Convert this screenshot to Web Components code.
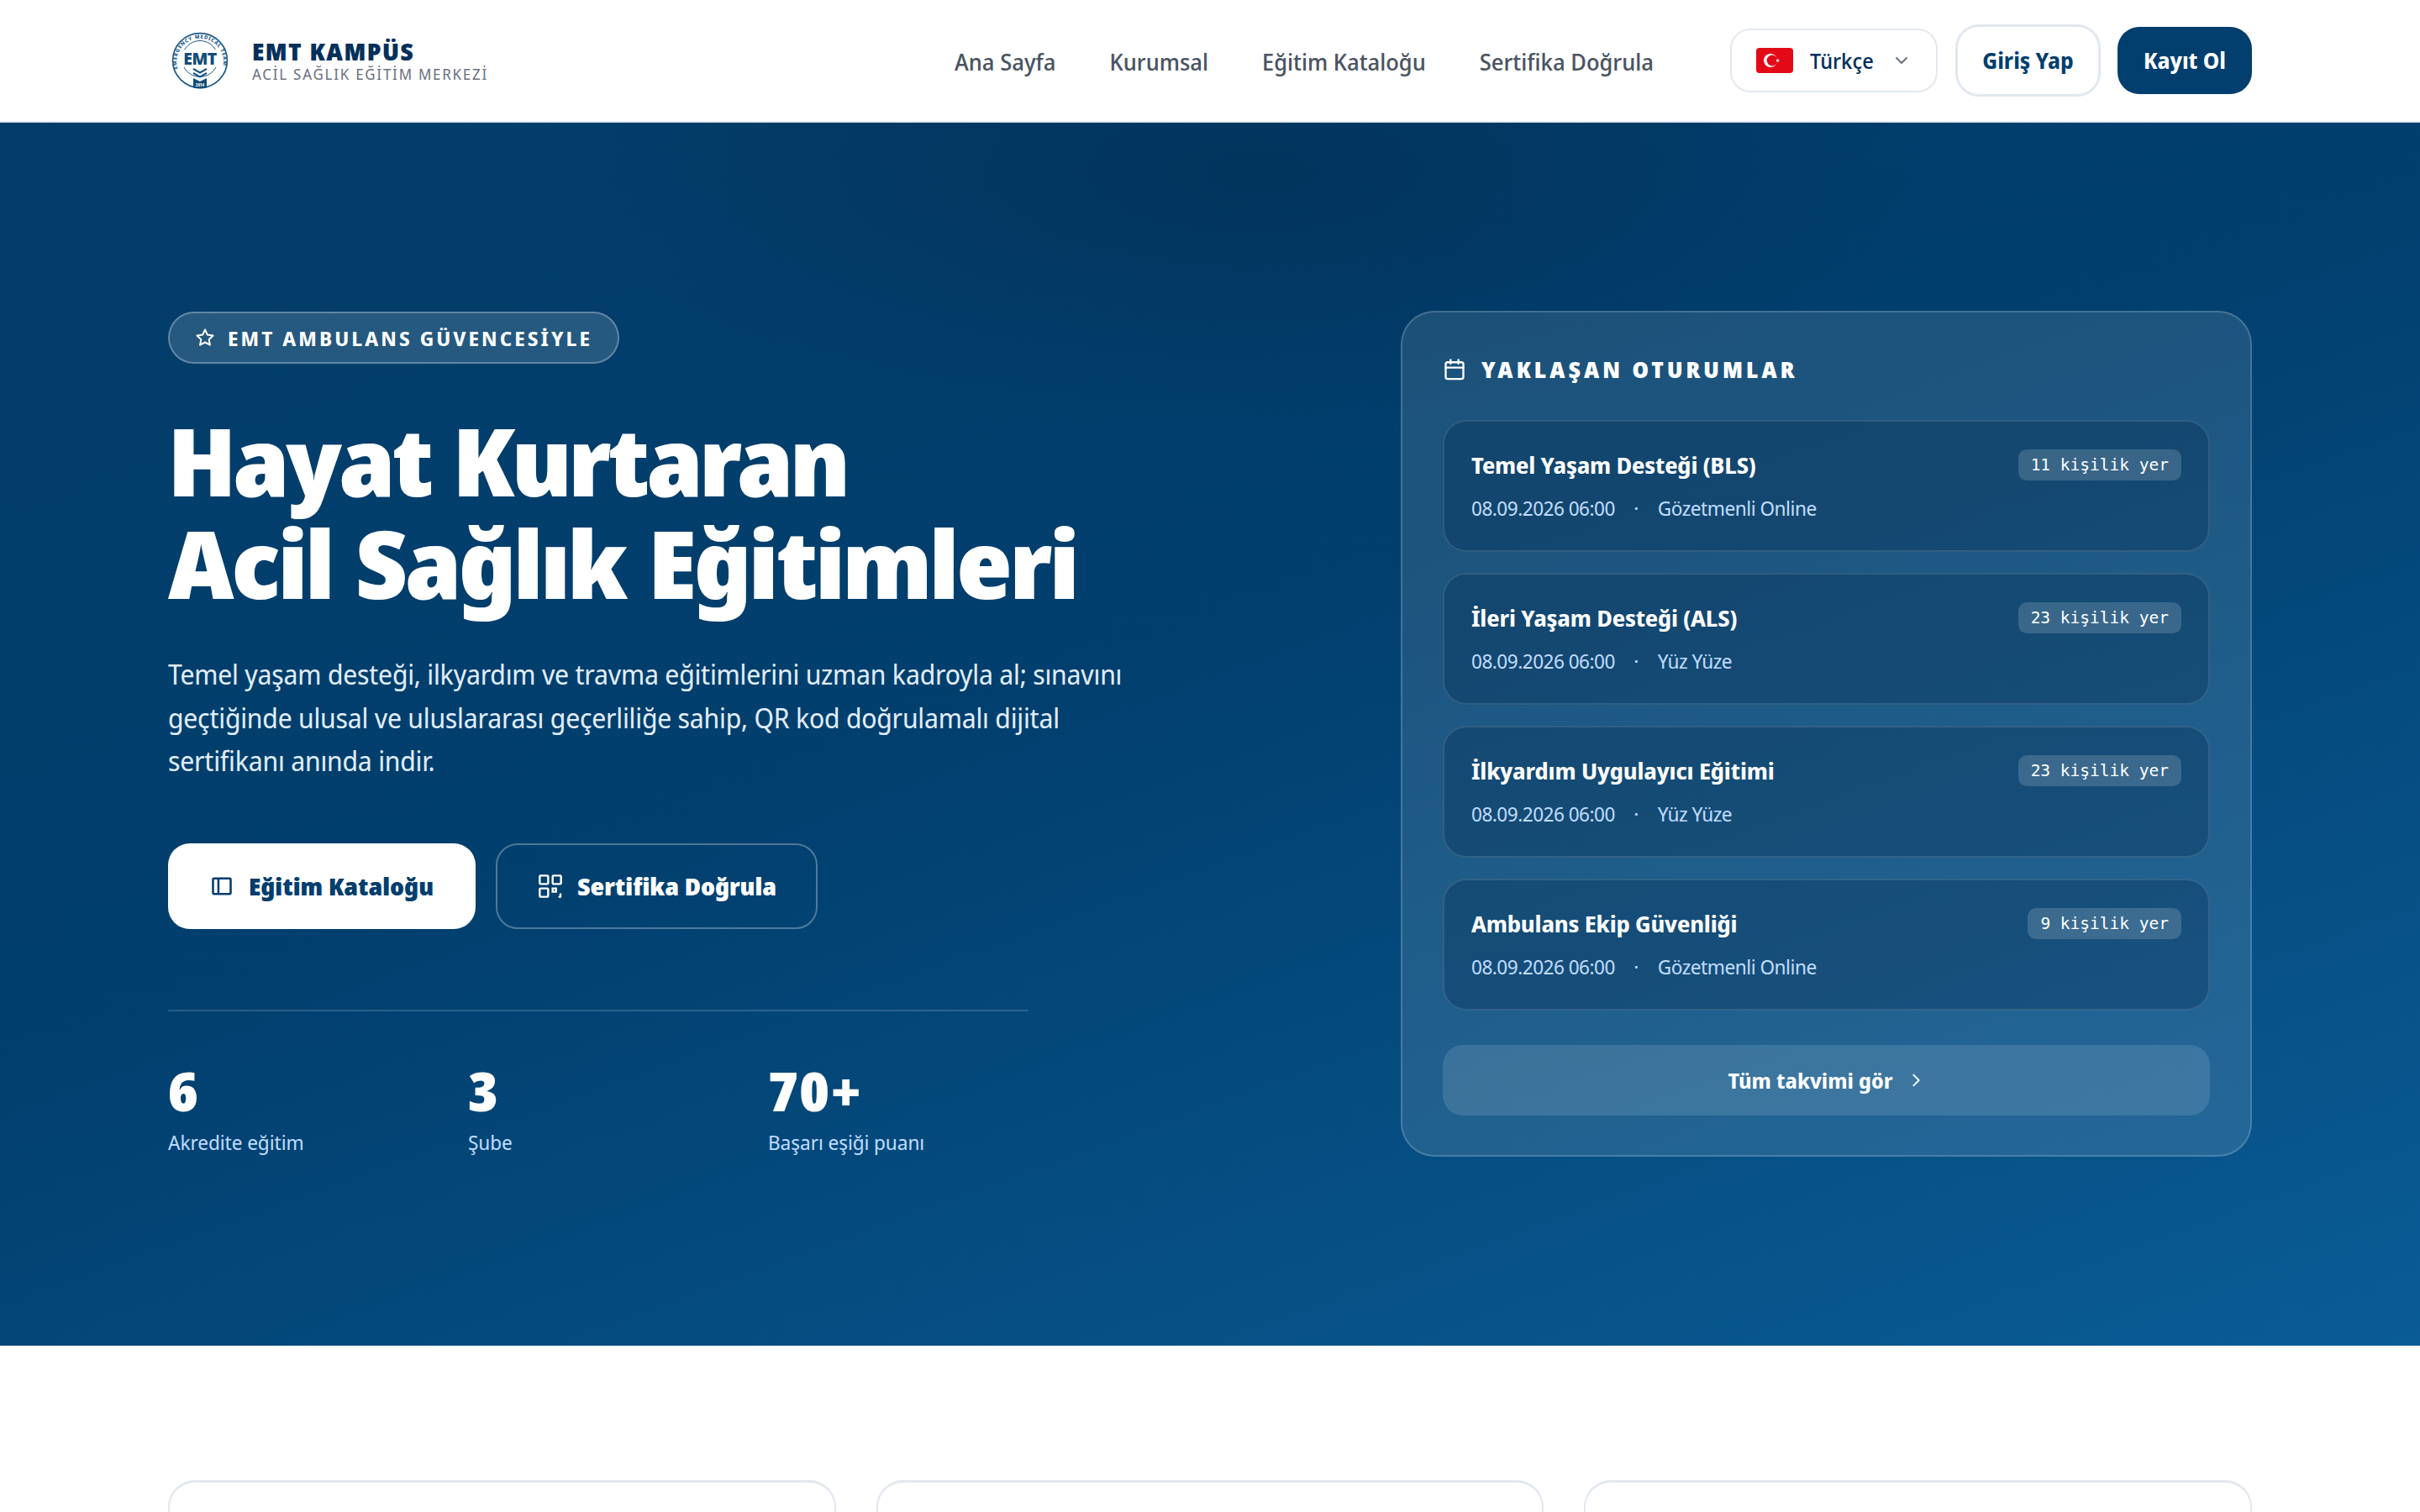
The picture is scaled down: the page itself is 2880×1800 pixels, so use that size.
<!DOCTYPE html>
<html lang="tr">
<head>
<meta charset="utf-8">
<title>EMT Kampüs</title>
<style>
html,body{margin:0;padding:0;background:#fff;font-family:"Noto Sans Display","Noto Sans",sans-serif;overflow:hidden;height:1800px;}
</style>
</head>
<body>
<emt-nav></emt-nav>
<emt-hero></emt-hero>
<emt-features></emt-features>
<script>
const chevronDown = `<svg width="24" height="24" viewBox="0 0 24 24" fill="none" stroke="currentColor" stroke-width="2" stroke-linecap="round" stroke-linejoin="round"><path d="m6 9 6 6 6-6"/></svg>`;

class EmtLogo extends HTMLElement{
    constructor(){
        super();
        this.attachShadow({mode:"open"});
        this.shadowRoot.innerHTML = `
        <style>
            :host{display:block;width:68px;height:68px;}
            svg{display:block;}
            text{font-family:"Noto Sans",sans-serif;font-weight:800;fill:#1c5a88;}
        </style>
        <svg width="68" height="68" viewBox="0 0 68 68">
            <defs>
                <path id="ring" d="M7.5 44 A27.8 27.8 0 1 1 60.5 44"/>
            </defs>
            <circle cx="34" cy="34" r="32.4" fill="#fff" stroke="#1c5a88" stroke-width="1.7"/>
            <text font-size="6" letter-spacing=".75"><textPath href="#ring">EMERGENCY MEDICAL TEAM</textPath></text>
            <circle cx="34" cy="32" r="21.5" fill="none" stroke="#1c5a88" stroke-width="1"/>
            <rect x="10" y="21" width="48" height="21" fill="#fff"/>
            <text x="34" y="39" font-size="19.5" text-anchor="middle" style="font-weight:900;fill:#134c78" letter-spacing="-.6">EMT</text>
            <path d="M26 44l8 4.5 8-4.5M26 49l8 4.5 8-4.5" fill="none" stroke="#1c5a88" stroke-width="2.2"/>
            <path d="M26 55l8 4 8-4v11.5a33 33 0 0 1-16 0z" fill="#134c78"/>
            <text x="34" y="64.5" font-size="4.5" text-anchor="middle" style="fill:#fff">2014</text>
        </svg>`;
    }
}
customElements.define("emt-logo", EmtLogo);

class EmtNav extends HTMLElement{
    constructor(){
        super();
        this.attachShadow({mode:"open"});
        this.shadowRoot.innerHTML = `
        <style>
            :host{display:block;background:#fff;border-bottom:2px solid #e2e8f0;height:144px;box-sizing:content-box;}
            .bar{width:2480px;height:144px;margin:0 auto;display:flex;align-items:center;}
            .brand{display:flex;align-items:center;gap:28px;margin-left:4px;}
            .names{display:flex;flex-direction:column;}
            .name{font-size:28px;line-height:32px;font-weight:900;color:#03305a;letter-spacing:1.45px;}
            .sub{font-size:18px;line-height:22px;color:#6b7280;letter-spacing:1.75px;}
            .links{margin-left:auto;display:flex;gap:64px;font-size:27px;font-weight:500;color:#4b5563;}
            .links span{white-space:nowrap;position:relative;top:1px;}
            .actions{display:flex;align-items:center;margin-left:91px;}
            .lang{width:247px;height:76px;box-sizing:border-box;border:2px solid #e2e8f0;border-radius:24px;display:flex;align-items:center;padding-left:29px;color:#03305a;font-size:25px;font-weight:500;}
            .flag{margin-right:20px;display:block;border-radius:4px;}
            .lang .chev{margin-left:21px;color:#6b7280;display:flex;}
            .login{margin-left:21px;width:173px;height:86px;box-sizing:border-box;border:3px solid #e2e8f0;border-radius:28px;display:flex;align-items:center;justify-content:center;font-size:26px;font-weight:700;color:#023e6e;}
            .register{margin-left:20px;width:160px;height:80px;border-radius:26px;background:#023e6e;display:flex;align-items:center;justify-content:center;font-size:26px;font-weight:700;color:#fff;}
        </style>
        <div class="bar">
            <div class="brand">
                <emt-logo></emt-logo>
                <div class="names">
                    <span class="name">EMT KAMPÜS</span>
                    <span class="sub">ACİL SAĞLIK EĞİTİM MERKEZİ</span>
                </div>
            </div>
            <nav class="links">
                <span>Ana Sayfa</span><span>Kurumsal</span><span>Eğitim Kataloğu</span><span>Sertifika Doğrula</span>
            </nav>
            <div class="actions">
                <div class="lang">
                    <svg class="flag" width="44" height="30" viewBox="0 0 44 30"><rect width="44" height="30" fill="#e30a17"/><circle cx="17" cy="15" r="8" fill="#fff"/><circle cx="19" cy="15" r="6.4" fill="#e30a17"/><path d="M28.4 15l-5 1.6 3.1-4.2v5.2l-3.1-4.2z" fill="#fff"/></svg>
                    <span>Türkçe</span>
                    <span class="chev">${chevronDown}</span>
                </div>
                <div class="login">Giriş Yap</div>
                <div class="register">Kayıt Ol</div>
            </div>
        </div>`;
    }
}
customElements.define("emt-nav", EmtNav);

class EmtStat extends HTMLElement{
    constructor(){
        super();
        this.attachShadow({mode:"open"});
        this.shadowRoot.innerHTML = `
        <style>
            :host{display:block;}
            .v{font-size:64px;line-height:72px;font-weight:900;color:#fff;letter-spacing:1.5px;}
            .l{font-size:24px;line-height:36px;color:#bfdbfe;margin-top:7px;letter-spacing:-.1px;}
        </style>
        <div class="v">${this.getAttribute("value")}</div>
        <div class="l"><slot></slot></div>`;
    }
}
customElements.define("emt-stat", EmtStat);

class EmtSession extends HTMLElement{
    constructor(){
        super();
        this.attachShadow({mode:"open"});
        this.shadowRoot.innerHTML = `
        <style>
            :host{display:block;box-sizing:border-box;height:157px;border:2px solid rgba(255,255,255,.12);border-radius:28px;background:rgba(0,40,76,.3);padding:33px 32px 0;}
            .top{display:flex;justify-content:space-between;align-items:flex-start;}
            .t{font-size:27px;line-height:38px;font-weight:700;color:#fff;letter-spacing:-.15px;}
            .pill{font-family:"DejaVu Sans Mono",monospace;font-size:19.5px;line-height:24px;color:#fff;background:rgba(255,255,255,.16);border-radius:10px;padding:7px 15px 6px;font-weight:400;}
            .m{display:flex;font-size:24px;line-height:34px;color:#bfdbfe;margin-top:15px;letter-spacing:-.5px;}
            .dot{width:51px;text-align:center;}
        </style>
        <div class="top"><span class="t"><slot></slot></span><span class="pill">${this.getAttribute("seats")} kişilik yer</span></div>
        <div class="m"><span>08.09.2026 06:00</span><span class="dot">·</span><span>${this.getAttribute("mode")}</span></div>`;
    }
}
customElements.define("emt-session", EmtSession);

class EmtHero extends HTMLElement{
    constructor(){
        super();
        this.attachShadow({mode:"open"});
        this.shadowRoot.innerHTML = `
        <style>
            :host{display:block;height:1456px;box-sizing:border-box;color:#fff;
                background:radial-gradient(1200px 450px at 1500px 60px,rgba(0,30,60,.3),transparent 70%),linear-gradient(160deg,#043d69 0%,#013f6e 45%,#0a5c96 100%);}
            .wrap{width:2480px;margin:0 auto;padding-top:225px;display:grid;grid-template-columns:1fr 1013px;}
            .badge{display:inline-flex;align-items:center;gap:15px;height:62px;box-sizing:border-box;padding:0 30px 0 30px;border:2px solid rgba(255,255,255,.28);border-radius:31px;background:rgba(255,255,255,.14);font-size:24px;font-weight:700;letter-spacing:3.05px;white-space:nowrap;}
            .badge svg{display:block;}
            h1{margin:54px 0 0;font-size:112px;line-height:122px;font-weight:900;letter-spacing:-3.7px;word-spacing:3px;}
            h1 span{letter-spacing:-3px;}
            p{margin:46px 0 0;font-size:32px;line-height:51.5px;color:#e0edfb;width:1160px;letter-spacing:-.22px;}
            .btns{display:flex;gap:24px;margin-top:72px;}
            .btn{height:102px;box-sizing:border-box;border-radius:26px;display:flex;align-items:center;justify-content:center;gap:18px;font-size:28px;font-weight:900;}
            .btn.a{width:366px;background:#fff;color:#023e6e;}
            .btn.b{width:383px;border:2px solid rgba(255,255,255,.3);color:#fff;gap:16px;}
            .rule{width:1024px;height:2px;background:rgba(255,255,255,.16);margin-top:96px;}
            .stats{width:1071px;display:grid;grid-template-columns:repeat(3,1fr);margin-top:59px;}
            .card{box-sizing:border-box;height:1007px;margin-top:-1px;border:2px solid rgba(255,255,255,.18);border-radius:40px;background:rgba(255,255,255,.11);padding:48px;}
            .head{display:flex;align-items:center;gap:18px;font-size:26px;line-height:40px;font-weight:900;letter-spacing:4.05px;}
            .list{display:flex;flex-direction:column;gap:25px;margin-top:40px;}
            .all{margin-top:41px;height:84px;border-radius:24px;background:rgba(255,255,255,.12);display:flex;align-items:center;justify-content:center;gap:16px;font-size:25px;font-weight:700;}
        </style>
        <div class="wrap">
            <div class="left">
                <div class="badge">
                    <svg width="24" height="24" viewBox="0 0 24 24" fill="none" stroke="#fff" stroke-width="2" stroke-linejoin="round"><path d="M12 2.5l2.9 6.1 6.6.9-4.8 4.6 1.2 6.6-5.9-3.2-5.9 3.2 1.2-6.6L2.5 9.5l6.6-.9z"/></svg>
                    EMT AMBULANS GÜVENCESİYLE
                </div>
                <h1>Hayat Kurtaran<br><span>Acil Sağlık Eğitimleri</span></h1>
                <p>Temel yaşam desteği, ilkyardım ve travma eğitimlerini uzman kadroyla al; sınavını geçtiğinde ulusal ve uluslararası geçerliliğe sahip, QR kod doğrulamalı dijital sertifikanı anında indir.</p>
                <div class="btns">
                    <div class="btn a">
                        <svg width="28" height="28" viewBox="0 0 24 24" fill="none" stroke="currentColor" stroke-width="2.2"><rect x="3" y="4" width="18" height="16" rx="1"/><path d="M8.5 4v16"/></svg>
                        Eğitim Kataloğu
                    </div>
                    <div class="btn b">
                        <svg width="32" height="32" viewBox="0 0 24 24" fill="none" stroke="currentColor" stroke-width="1.8"><rect x="2.5" y="2.5" width="7.5" height="7.5" rx=".8"/><rect x="14" y="2.5" width="7.5" height="7.5" rx=".8"/><rect x="2.5" y="14" width="7.5" height="7.5" rx=".8"/><path d="M14 14h3v3h-3zM21 19v2.500M20 21.500h1" stroke-linecap="round"/></svg>
                        Sertifika Doğrula
                    </div>
                </div>
                <div class="rule"></div>
                <div class="stats">
                    <emt-stat value="6">Akredite eğitim</emt-stat>
                    <emt-stat value="3">Şube</emt-stat>
                    <emt-stat value="70+">Başarı eşiği puanı</emt-stat>
                </div>
            </div>
            <aside class="card">
                <div class="head">
                    <svg width="28" height="28" viewBox="0 0 24 24" fill="none" stroke="#fff" stroke-width="2" stroke-linecap="round"><rect x="3" y="4.500" width="18" height="17" rx="2"/><path d="M8 2v4M16 2v4M3 10h18"/></svg>
                    YAKLAŞAN OTURUMLAR
                </div>
                <div class="list">
                    <emt-session seats="11" mode="Gözetmenli Online">Temel Yaşam Desteği (BLS)</emt-session>
                    <emt-session seats="23" mode="Yüz Yüze">İleri Yaşam Desteği (ALS)</emt-session>
                    <emt-session seats="23" mode="Yüz Yüze">İlkyardım Uygulayıcı Eğitimi</emt-session>
                    <emt-session seats="9" mode="Gözetmenli Online">Ambulans Ekip Güvenliği</emt-session>
                </div>
                <div class="all">Tüm takvimi gör
                    <svg width="22" height="22" viewBox="0 0 24 24" fill="none" stroke="#fff" stroke-width="2" stroke-linecap="round" stroke-linejoin="round"><path d="m9 5 7 7-7 7"/></svg>
                </div>
            </aside>
        </div>`;
    }
}
customElements.define("emt-hero", EmtHero);

class EmtFeatures extends HTMLElement{
    constructor(){
        super();
        this.attachShadow({mode:"open"});
        this.shadowRoot.innerHTML = `
        <style>
            :host{display:block;background:#fff;padding-top:160px;}
            .grid{width:2480px;margin:0 auto;display:grid;grid-template-columns:repeat(3,1fr);gap:48px;}
            .c{height:300px;box-sizing:border-box;border:2px solid #e2e8f0;border-top-width:3px;border-radius:32px;background:#fff;}
        </style>
        <div class="grid"><div class="c"></div><div class="c"></div><div class="c"></div></div>`;
    }
}
customElements.define("emt-features", EmtFeatures);
</script>
</body>
</html>
